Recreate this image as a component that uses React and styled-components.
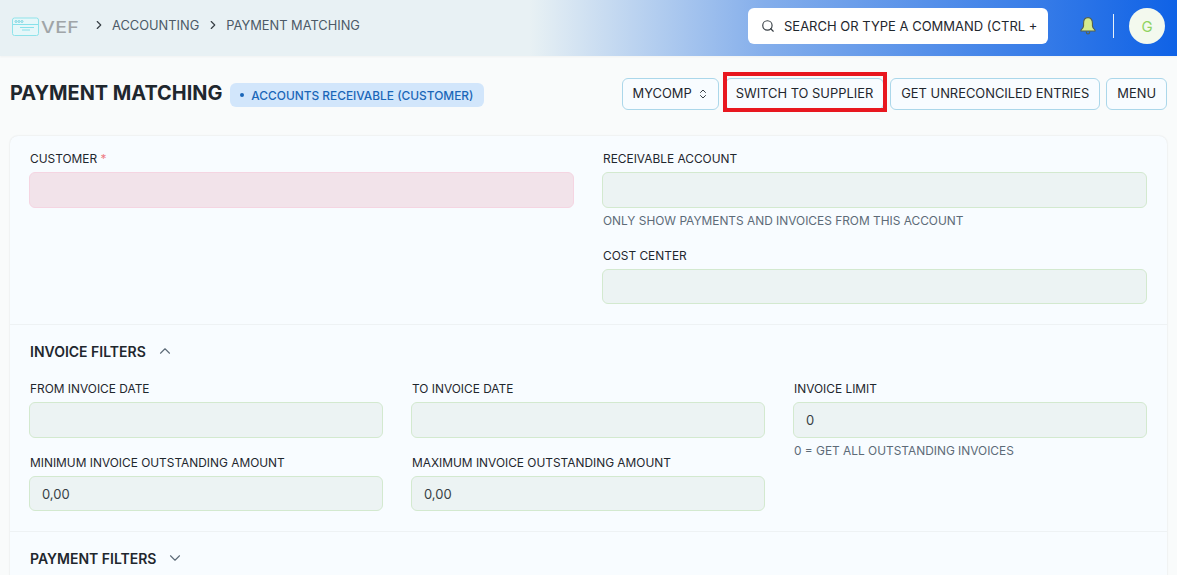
import React from "react";
import styled, { createGlobalStyle } from "styled-components";
import { ChevronRight, ChevronUp, ChevronDown, ChevronsUpDown, Search } from "lucide-react";

const Global = createGlobalStyle`
  html, body { margin: 0; padding: 0; height: 575px; overflow: hidden; background: #f9fbfb; }
  * { box-sizing: border-box; }
  body { font-family: Inter, "Liberation Sans", sans-serif; font-size: 12.9px; color: #1f272e; text-transform: uppercase; }
`;

const Navbar = styled.header`
  height: 56px;
  display: flex;
  align-items: center;
  padding: 0 12px;
  background: linear-gradient(90deg, #e8f1f4 0%, #e8f1f4 45%, #84aeeb 65%, #0f62e6 100%);
  box-shadow: 0 1px 2px rgba(0, 0, 0, 0.04);
`;
const Logo = styled.div`
  display: flex;
  align-items: center;
  width: 66px;
  margin-top: -3px;
`;
const LogoText = styled.span`
  font-size: 16px;
  font-weight: 500;
  letter-spacing: 0.3px;
  color: #a0a5a8;
  margin-left: 1px;
  transform: scaleX(1.22);
  transform-origin: left;
`;
const Crumbs = styled.nav`
  display: flex;
  align-items: center;
  margin-left: 14px;
  margin-top: -6px;
  color: #4c5a67;
  font-size: 12.85px;
`;
const Crumb = styled.span`
  display: flex;
  align-items: center;
  gap: 6px;
  margin-right: 7px;
  svg { color: #383f45; }
`;
const NavRight = styled.div`
  margin-left: auto;
  display: flex;
  align-items: center;
`;
const SearchBox = styled.div`
  width: 300px;
  height: 36px;
  background: #fff;
  border-radius: 6px;
  display: flex;
  align-items: center;
  gap: 9px;
  padding: 0 13px;
  margin: -4px 2px 0 0;
  white-space: nowrap;
  color: #1f272e;
  font-size: 13px;
  svg { flex: none; color: #383f45; }
`;
const Bell = styled.svg`
  margin-left: 29px;
  margin-top: -4px;
`;
const Divider = styled.div`
  width: 1px;
  height: 24px;
  background: #e8f1f8;
  margin: -4px 15px 0 16px;
`;
const Avatar = styled.div`
  width: 36px;
  height: 36px;
  border-radius: 50%;
  background: #f3f9ee;
  color: #8fd35f;
  font-size: 15px;
  display: flex;
  align-items: center;
  justify-content: center;
  margin-top: -4px;
`;

const PageHead = styled.div`
  height: 80px;
  padding: 0 10px;
  display: flex;
  align-items: center;
`;
const Title = styled.h1`
  margin: -7px 0 0;
  font-size: 19.9px;
  font-weight: 700;
  line-height: 24px;
  color: #1f272e;
`;
const Badge = styled.span`
  display: flex;
  align-items: center;
  gap: 7px;
  height: 24px;
  margin: -2px 0 0 8px;
  padding: 0 11px 0 10px;
  border-radius: 6px;
  background: #d2e6fb;
  color: #1a66b8;
  font-size: 11.9px;
  font-weight: 500;
  white-space: nowrap;
  &::before {
    content: "";
    width: 4px;
    height: 4px;
    border-radius: 50%;
    background: #1a66b8;
  }
`;
const Actions = styled.div`
  margin-left: auto;
  display: flex;
  align-items: center;
  gap: 6px;
  margin-top: -5px;
`;
const Button = styled.button`
  position: relative;
  height: 32px;
  padding: 0 10px;
  display: flex;
  align-items: center;
  gap: 5px;
  font: inherit;
  text-transform: inherit;
  white-space: nowrap;
  color: #1f272e;
  background: #f8fcff;
  border: 1px solid #abd7ea;
  border-radius: 6px;
  svg { color: #383f45; margin-right: -1px; }
`;
const HighlightedButton = styled(Button)`
  &::after {
    content: "";
    position: absolute;
    top: -7px;
    right: -4px;
    bottom: -3px;
    left: -3px;
    border: 4.5px solid #e8171f;
  }
`;

const Card = styled.main`
  margin: 0 10px;
  background: #f8fcff;
  border-radius: 8px;
  box-shadow: 0 0 2px rgba(0, 0, 0, 0.12);
`;
const Section = styled.section`
  padding: ${(p) => (p.$titled ? 14 : 15)}px 20px 20px 19px;
  border-bottom: 1px solid #eef2f4;
`;
const TwoCols = styled.div`
  display: grid;
  grid-template-columns: 1fr 1fr;
  column-gap: 28px;
`;
const ThreeCols = styled.div`
  display: grid;
  grid-template-columns: repeat(3, 1fr);
  column-gap: 28px;
  margin-top: 18px;
`;
const Column = styled.div`
  display: flex;
  flex-direction: column;
  gap: ${(p) => p.$gap || 17}px;
`;
const Field = styled.div`
  display: flex;
  flex-direction: column;
`;
const Label = styled.label`
  font-size: 11.9px;
  line-height: 16px;
  margin: 0 0 5px 1px;
  color: #1f272e;
`;
const Required = styled.span`
  color: #ee7d85;
`;
const Input = styled.div`
  height: ${(p) => (p.$tall ? 36 : 35)}px;
  border-radius: 6px;
  padding: 0 12px;
  display: flex;
  align-items: center;
  font-size: 13px;
  color: #383f45;
  background: ${(p) => (p.$error ? "#f2e3ea" : "#ecf3f3")};
  border: 1px solid ${(p) => (p.$error ? "#f5d5e2" : "#d3e9cf")};
`;
const Help = styled.p`
  margin: 5px 0 0 1px;
  font-size: 11.9px;
  line-height: 16px;
  color: #5d6b78;
`;
const SectionHead = styled.div`
  display: flex;
  align-items: center;
  gap: 10px;
  height: 24px;
  margin-left: 1px;
  font-size: 14px;
  font-weight: 600;
  color: #1f272e;
  svg { color: #5d6b78; }
`;

const Filter = ({ label, value, tall }) => (
  <Field>
    <Label>{label}</Label>
    <Input $tall={tall}>{value}</Input>
  </Field>
);

export default function App() {
  return (
    <>
      <Global />
      <Navbar>
        <Logo>
          <svg width="28" height="20" viewBox="0 0 28 20" fill="none" style={{ flex: "none" }}>
            <rect x="0.5" y="1" width="26" height="17.500" rx="2" fill="#e6f7f9" stroke="#8fe3ea" strokeWidth="1" />
            <circle cx="4" cy="4.500" r="1" stroke="#55c8d8" strokeWidth="0.7" />
            <circle cx="7" cy="4.500" r="1" stroke="#55c8d8" strokeWidth="0.7" />
            <circle cx="10" cy="4.500" r="1" stroke="#55c8d8" strokeWidth="0.7" />
            <path d="M1 7.500H26M8 10.500H22M10 13H18" stroke="#6fdbe6" strokeWidth="0.8" />
          </svg>
          <LogoText>VEF</LogoText>
        </Logo>
        <Crumbs>
          <Crumb><ChevronRight size={14} />Accounting</Crumb>
          <Crumb><ChevronRight size={14} />Payment Matching</Crumb>
        </Crumbs>
        <NavRight>
          <SearchBox><Search size={14} />Search or type a command (Ctrl +</SearchBox>
          <Bell width="18" height="20" viewBox="0 0 16 18">
            <path d="M8 1.500c-2.800 0-4 2.400-4 5v2.600c0 1.400-1 2.400-2.300 3.600v.8h12.600v-.8C13 11.500 12 10.500 12 9.100V6.500c0-2.600-1.200-5-4-5z" fill="#d5eb8e" stroke="#55614f" strokeWidth="1" />
            <path d="M6.500 14v.7a1.500 1.500 0 0 0 3 0V14" fill="none" stroke="#55614f" strokeWidth="1" />
          </Bell>
          <Divider />
          <Avatar>G</Avatar>
        </NavRight>
      </Navbar>

      <PageHead>
        <Title>Payment Matching</Title>
        <Badge>Accounts Receivable (Customer)</Badge>
        <Actions>
          <Button>MyComp <ChevronsUpDown size={12} /></Button>
          <HighlightedButton>Switch to Supplier</HighlightedButton>
          <Button>Get Unreconciled Entries</Button>
          <Button>Menu</Button>
        </Actions>
      </PageHead>

      <Card>
        <Section>
          <TwoCols>
            <Column>
              <Field>
                <Label>Customer <Required>*</Required></Label>
                <Input $error $tall />
              </Field>
            </Column>
            <Column $gap={19}>
              <Field>
                <Label>Receivable Account</Label>
                <Input $tall />
                <Help>Only show payments and invoices from this account</Help>
              </Field>
              <Field>
                <Label>Cost Center</Label>
                <Input />
              </Field>
            </Column>
          </TwoCols>
        </Section>
        <Section $titled>
          <SectionHead>Invoice Filters <ChevronUp size={18} strokeWidth={1.5} /></SectionHead>
          <ThreeCols>
            <Column>
              <Filter label="From Invoice Date" tall />
              <Filter label="Minimum Invoice Outstanding Amount" value="0,00" />
            </Column>
            <Column>
              <Filter label="To Invoice Date" tall />
              <Filter label="Maximum Invoice Outstanding Amount" value="0,00" />
            </Column>
            <Column>
              <Field>
                <Label>Invoice Limit</Label>
                <Input $tall>0</Input>
                <Help>0 = Get all outstanding invoices</Help>
              </Field>
            </Column>
          </ThreeCols>
        </Section>
        <Section $titled>
          <SectionHead>Payment Filters <ChevronDown size={18} strokeWidth={1.5} /></SectionHead>
        </Section>
      </Card>
    </>
  );
}
